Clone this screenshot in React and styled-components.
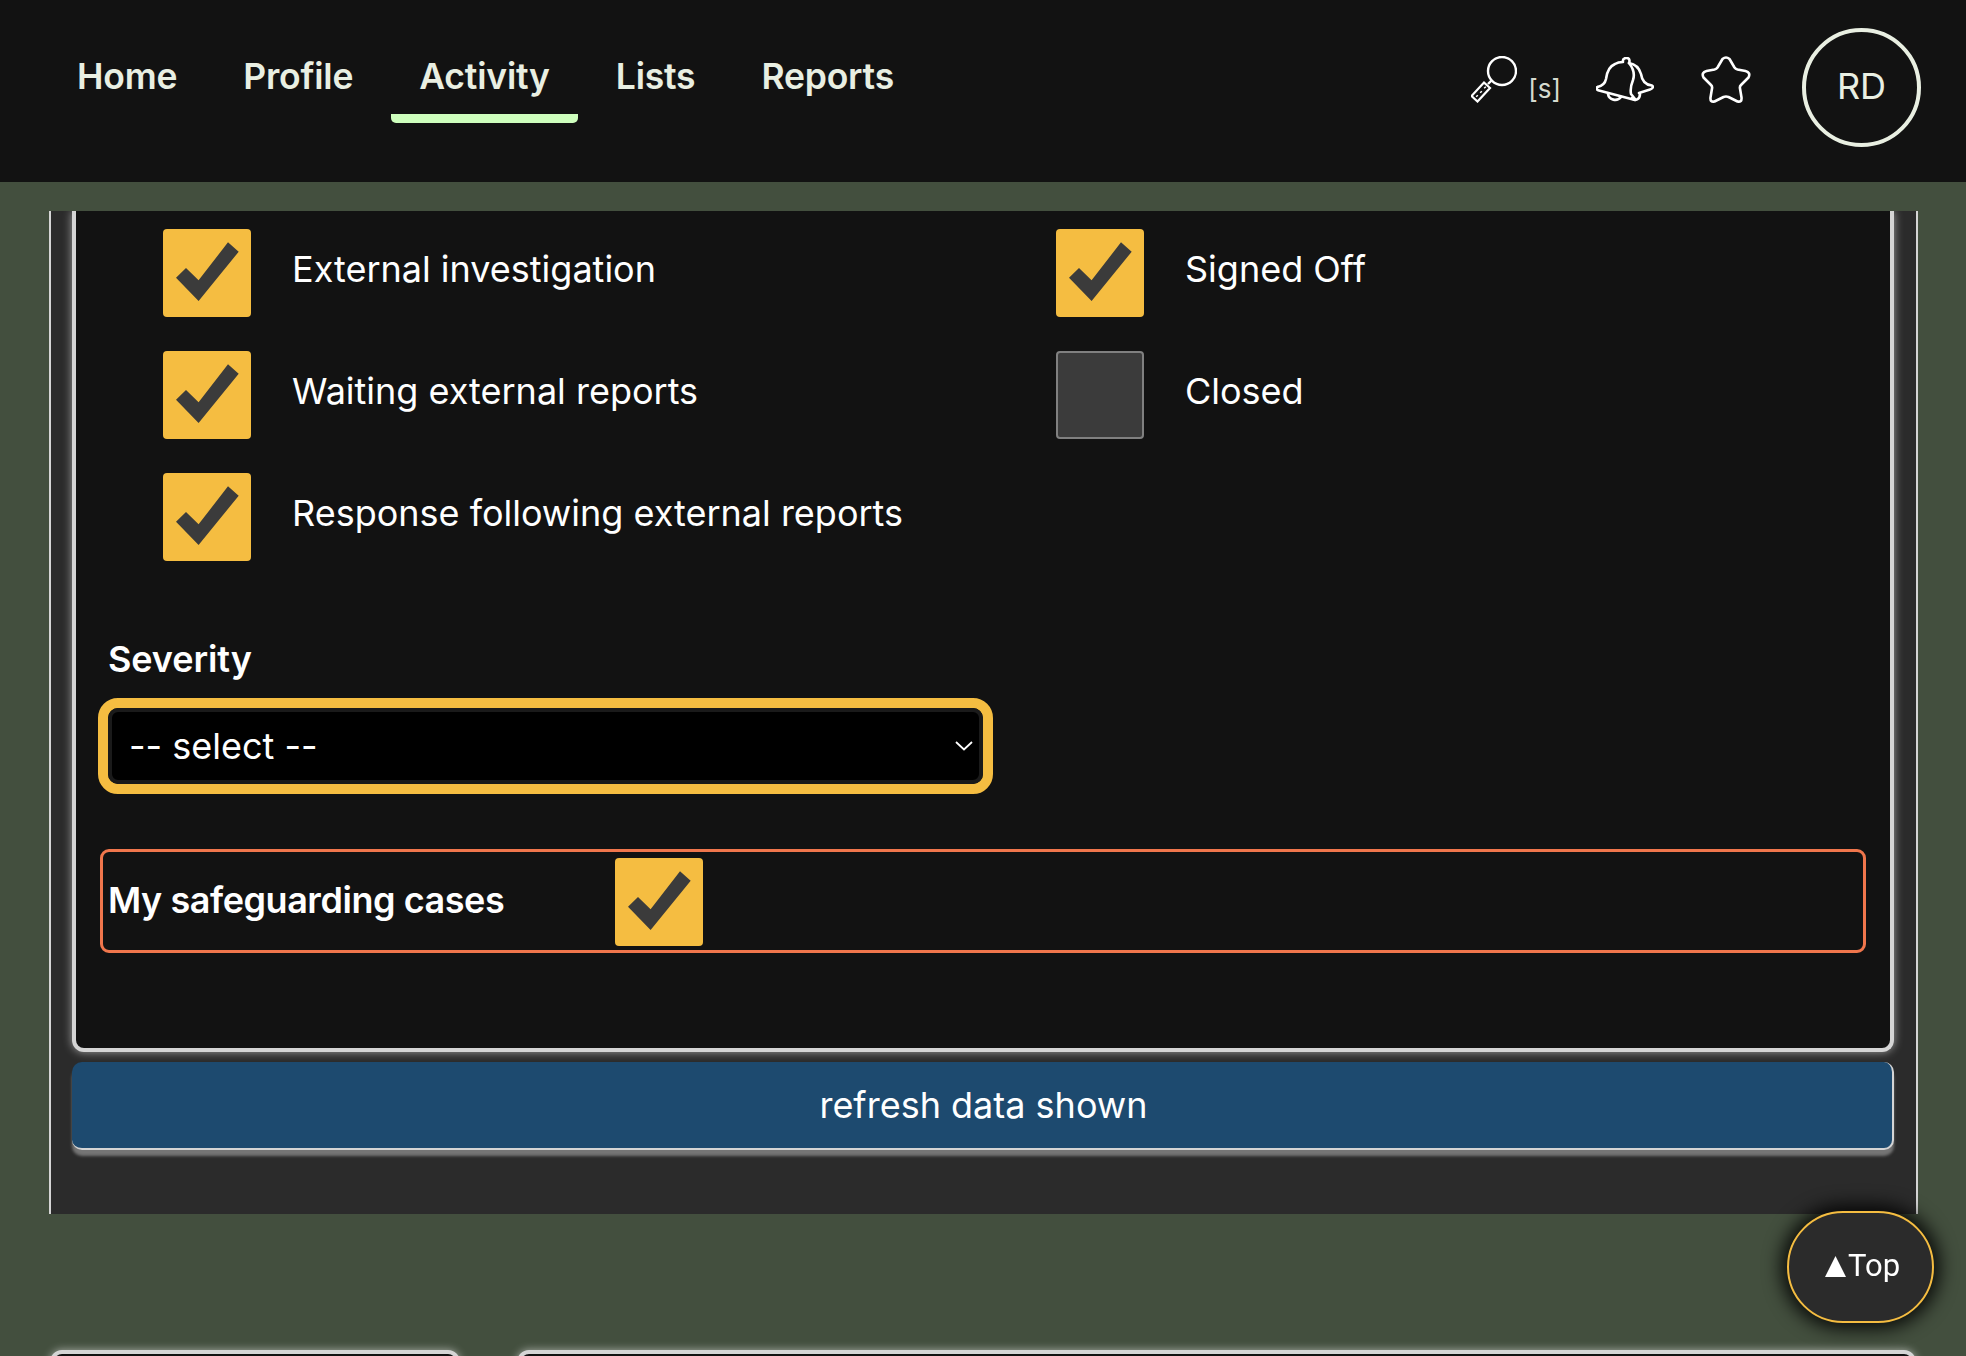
import React from "react";
import styled, { createGlobalStyle } from "styled-components";

const GlobalStyle = createGlobalStyle`
  html, body {
    margin: 0;
    height: 100%;
    overflow: hidden;
    background: #434f3e;
    font-family: Inter, "Liberation Sans", sans-serif;
  }
  * {
    box-sizing: border-box;
  }
`;

const Page = styled.div`
  height: 1356px;
  overflow: hidden;
  display: flex;
  flex-direction: column;
`;

const Header = styled.header`
  flex: none;
  height: 182px;
  background: #121212;
  display: flex;
  align-items: flex-start;
  justify-content: space-between;
  padding: 28px 45px 0 49px;
`;

const Nav = styled.nav`
  display: flex;
  gap: 10px;
`;

const NavItem = styled.a`
  height: 95px;
  padding: 29px 28px 0;
  font-size: 35.5px;
  line-height: 40px;
  font-weight: 600;
  letter-spacing: -0.2px;
  color: #e9efe2;
  border-bottom: ${(props) => (props.active ? "9px solid #ceffbd" : "none")};
  border-radius: 0 0 5px 5px;
`;

const Tools = styled.div`
  display: flex;
  align-items: flex-start;
`;

const SearchTool = styled.div`
  display: flex;
  align-items: flex-end;
  gap: 11px;
  margin: 28px 35px 0 0;
`;

const ShortcutHint = styled.span`
  font-size: 26px;
  line-height: 30px;
  color: #d5dacf;
  margin-bottom: -1px;
`;

const BellWrap = styled.div`
  display: flex;
  margin-top: 29px;
`;

const StarWrap = styled.div`
  display: flex;
  margin: 27px 50px 0 46px;
`;

const Avatar = styled.div`
  width: 119px;
  height: 119px;
  border: 4px solid #e9efe2;
  border-radius: 50%;
  display: flex;
  align-items: center;
  justify-content: center;
  font-size: 36px;
  color: #e9efe2;
  padding-bottom: 3px;
`;

const Panel = styled.section`
  flex: none;
  margin: 29px 48px 0 49px;
  height: 1003px;
  background: #2b2b2b;
  border-left: 2px solid #d5d5d5;
  border-right: 2px solid #d5d5d5;
  padding: 0 22px 0 21px;
  overflow: hidden;
`;

const FilterBox = styled.div`
  height: 841px;
  background: #121212;
  border: 4px solid #d5d5d5;
  border-top: none;
  border-radius: 0 0 12px 12px;
  box-shadow: 0 0 10px rgba(255, 255, 255, 0.55);
  padding: 18px 24px 0 22px;
`;

const StatusGrid = styled.div`
  display: grid;
  grid-template-columns: 893px 1fr;
  grid-auto-rows: 88px;
  row-gap: 34px;
  padding-left: 65px;
`;

const CheckRow = styled.label`
  display: flex;
  align-items: center;
  gap: 41px;
`;

const Box = styled.span`
  flex: none;
  width: 88px;
  height: 88px;
  border-radius: 4px;
  display: block;
  background: ${(props) => (props.checked ? "#f5bd41" : "#3b3b3b")};
  border: ${(props) => (props.checked ? "none" : "2px solid #808080")};
`;

const RowLabel = styled.span`
  font-size: 36px;
  line-height: 40px;
  color: #fff;
  margin-top: -8px;
`;

const FieldTitle = styled.div`
  font-size: 36px;
  line-height: 40px;
  font-weight: 600;
  letter-spacing: -0.1px;
  color: #fff;
`;

const SeverityBlock = styled.div`
  margin-top: 78px;
  padding-left: 10px;
`;

const SelectWrap = styled.div`
  position: relative;
  width: 895px;
  height: 96px;
  margin: 19px 0 0 -10px;
  border: 10px solid #f5bd41;
  border-radius: 20px;
`;

const Select = styled.select`
  display: block;
  width: 100%;
  height: 100%;
  appearance: none;
  background: #000;
  color: #fff;
  border: 4px solid #1a1a1a;
  border-radius: 10px;
  padding: 0 17px;
  font: 400 36px Inter, sans-serif;
`;

const Chevron = styled.svg`
  position: absolute;
  right: 10px;
  top: 33px;
  pointer-events: none;
`;

const SafeguardingRow = styled.div`
  margin: 55px 0 0 2px;
  height: 104px;
  width: 1766px;
  border: 3px solid #f0764c;
  border-radius: 9px;
  display: flex;
  align-items: center;
  padding: 2px 0 0 5px;
`;

const SafeguardingLabel = styled(FieldTitle)`
  width: 507px;
  margin-top: -4px;
  letter-spacing: -0.45px;
`;

const RefreshButton = styled.button`
  display: block;
  width: 100%;
  height: 88px;
  margin-top: 10px;
  background: #1d4a6f;
  border: none;
  border-right: 2px solid #d5d5d5;
  border-bottom: 2px solid #d5d5d5;
  border-radius: 10px;
  box-shadow: 0 6px 3px rgba(255, 255, 255, 0.35);
  color: #fff;
  font: 400 36px Inter, sans-serif;
  padding: 0 0 0 3px;
`;

const LowerCards = styled.div`
  flex: none;
  margin: 136px 50px 0 50px;
  display: flex;
  gap: 57px;
`;

const LowerCard = styled.div`
  height: 60px;
  flex: ${(props) => (props.wide ? "1" : "none")};
  width: ${(props) => (props.wide ? "auto" : "410px")};
  background: #121212;
  border: 4px solid #d5d5d5;
  border-radius: 12px;
  box-shadow: 0 0 8px rgba(255, 255, 255, 0.55);
`;

const TopButton = styled.button`
  position: fixed;
  left: 1787px;
  top: 1211px;
  width: 147px;
  height: 112px;
  border: 2px solid #f5bd41;
  border-radius: 56px;
  background: #2b2b2b;
  box-shadow: 0 0 18px 6px rgba(0, 0, 0, 0.85);
  color: #fff;
  font: 400 31px Roboto, sans-serif;
  padding: 0 0 4px 4px;
  display: flex;
  align-items: center;
  justify-content: center;
  gap: 2px;
`;

const TopArrow = styled.svg`
  margin-top: 2px;
`;

function Check() {
  return (
    <svg width="88" height="88" viewBox="0 0 88 88">
      <polygon
        points="13,48.7 23,39 35.6,51.3 65,13.3 75.7,22.7 35.6,72"
        fill="#3b3b3b"
      />
    </svg>
  );
}

function CheckItem({ label, checked }) {
  return (
    <CheckRow>
      <Box checked={checked}>{checked && <Check />}</Box>
      <RowLabel>{label}</RowLabel>
    </CheckRow>
  );
}

function SearchIcon() {
  return (
    <svg width="46" height="47" viewBox="0 0 46 47" fill="none" stroke="#fff" strokeWidth="2.4">
      <circle cx="31" cy="15" r="14" />
      <path d="M21 24l-4 4" />
      <path d="M13 26.500l6 5.500-12.500 13.500-6-5.500z" strokeWidth="2.2" />
      <path d="M5.500 39.500l1 1M9.500 35.500l1 1M13.500 31l1 1" />
    </svg>
  );
}

function BellIcon() {
  return (
    <svg width="58" height="46" viewBox="0 0 58 46" fill="none" stroke="#fff" strokeWidth="2.6" strokeLinejoin="round" strokeLinecap="round">
      <path d="M1.500 30C6 29 9 27 10 22C11 14 14 9 19 7C22 5 25 5 27 5C26 1 31 0 33 2C34 4 33 6 33 6C37 11 39 17 37 23C35 28 34 32 35 37L39 42" />
      <path d="M1.500 30C0 32 1 33 3 33.500L39 43" />
      <path d="M33 6C39 7 43 10 45 17C46 24 49 28 56 28.500C58 30 56 32 54 32.500L43 36" />
      <path d="M12 37C13 43 21 45 25 40M36 41C39 45 44 42 44 37" />
    </svg>
  );
}

function StarIcon() {
  return (
    <svg width="52" height="49" viewBox="-1.500 -1.500 52 49" fill="none" stroke="#fff" strokeWidth="2.6" strokeLinejoin="round">
      <path d="M21 2.500Q24.500 -0.500 28 2.500L33 11Q34 12.500 36 13L44 14.500Q49.500 16 47 21L39.500 28.500Q38 30 38.500 32L40 41Q40.500 46 36 45L27 40.500Q24.500 39.500 22 40.500L13 45Q8.500 46 9 41L10.500 32Q11 30 9.500 28.500L2 21Q-0.500 16 5 14.500L13 13Q15 12.500 16 11Z" />
    </svg>
  );
}

export default function App() {
  return (
    <Page>
      <GlobalStyle />
      <Header>
        <Nav>
          <NavItem>Home</NavItem>
          <NavItem>Profile</NavItem>
          <NavItem active>Activity</NavItem>
          <NavItem>Lists</NavItem>
          <NavItem>Reports</NavItem>
        </Nav>
        <Tools>
          <SearchTool>
            <SearchIcon />
            <ShortcutHint>[s]</ShortcutHint>
          </SearchTool>
          <BellWrap>
            <BellIcon />
          </BellWrap>
          <StarWrap>
            <StarIcon />
          </StarWrap>
          <Avatar>RD</Avatar>
        </Tools>
      </Header>
      <Panel>
        <FilterBox>
          <StatusGrid>
            <CheckItem label="External investigation" checked />
            <CheckItem label="Signed Off" checked />
            <CheckItem label="Waiting external reports" checked />
            <CheckItem label="Closed" />
            <CheckItem label="Response following external reports" checked />
          </StatusGrid>
          <SeverityBlock>
            <FieldTitle>Severity</FieldTitle>
            <SelectWrap>
              <Select defaultValue="">
                <option value="">-- select --</option>
              </Select>
              <Chevron width="18" height="10" viewBox="0 0 18 10" fill="none" stroke="#fff" strokeWidth="1.8">
                <path d="M1 1l8 7.500L17 1" />
              </Chevron>
            </SelectWrap>
          </SeverityBlock>
          <SafeguardingRow>
            <SafeguardingLabel>My safeguarding cases</SafeguardingLabel>
            <Box checked>
              <Check />
            </Box>
          </SafeguardingRow>
        </FilterBox>
        <RefreshButton>refresh data shown</RefreshButton>
      </Panel>
      <LowerCards>
        <LowerCard />
        <LowerCard wide />
      </LowerCards>
      <TopButton>
        <TopArrow width="21" height="21" viewBox="0 0 21 21">
          <polygon points="10.500,0 21,21 0,21" fill="#fff" />
        </TopArrow>
        Top
      </TopButton>
    </Page>
  );
}
